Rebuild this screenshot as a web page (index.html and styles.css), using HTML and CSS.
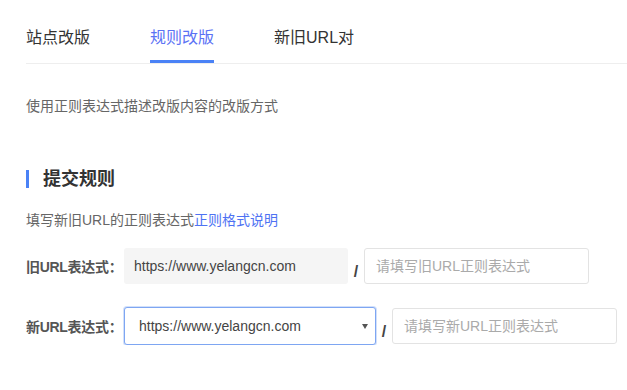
FILE: index.html
```html
<!DOCTYPE html>
<html>
<head>
    <title>规则改版</title>
    <link rel="stylesheet" href="styles.css">
</head>
<body>
    <div class="container">
        <div class="tabs">
            <a class="tab">站点改版</a>
            <a class="tab active">规则改版</a>
            <a class="tab">新旧URL对</a>
        </div>

        <p class="desc">使用正则表达式描述改版内容的改版方式</p>

        <h2 class="section-title">提交规则</h2>
        <p class="hint">填写新旧URL的正则表达式<a class="link">正则格式说明</a></p>

        <div class="form-row">
            <label class="row-label">旧URL表达式：</label>
            <div class="field readonly">https://www.yelangcn.com</div>
            <span class="slash">/</span>
            <input type="text" class="field text-input" placeholder="请填写旧URL正则表达式">
        </div>

        <div class="form-row">
            <label class="row-label">新URL表达式：</label>
            <div class="select-wrap">
                <select class="select">
                    <option>https://www.yelangcn.com</option>
                </select>
            </div>
            <span class="slash">/</span>
            <input type="text" class="field text-input" placeholder="请填写新URL正则表达式">
        </div>
    </div>
</body>
</html>
```

FILE: styles.css
```css
body {
    margin: 0;
    font-family: "Liberation Sans", "Noto Sans CJK SC", sans-serif;
    background-color: white;
    color: #333;
}
.container {
    padding-left: 26px;
}
.tabs {
    display: flex;
    gap: 60px;
    border-bottom: 1px solid #eee;
    height: 63px;
}
.tab {
    padding-top: 26px;
    padding-bottom: 10px;
    line-height: 24px;
    font-size: 16px;
    color: #333;
    border-bottom: 3px solid transparent;
}
.tab.active {
    color: #5b72f5;
    border-bottom-color: #4a82f6;
}
.desc {
    margin: 32px 0 0;
    font-size: 14px;
    line-height: 20px;
    color: #666;
}
.section-title {
    margin: 54px 0 0;
    font-size: 18px;
    line-height: 18px;
    font-weight: bold;
    color: #333;
    border-left: 3px solid #4a82f6;
    padding-left: 14px;
}
.hint {
    margin: 22px 0 0;
    font-size: 14px;
    line-height: 20px;
    color: #666;
}
.link {
    color: #4e72f3;
}
.form-row {
    display: flex;
    align-items: center;
    margin-top: 18px;
}
.form-row + .form-row {
    margin-top: 23px;
}
.row-label {
    flex-shrink: 0;
    width: 98px;
    white-space: nowrap;
    font-size: 14px;
    font-weight: bold;
    letter-spacing: -0.3px;
    color: #555;
}
.field {
    box-sizing: border-box;
    flex-shrink: 0;
    width: 225px;
    height: 36px;
    font-size: 14px;
    font-family: "Liberation Sans", "Noto Sans CJK SC", sans-serif;
    border-radius: 3px;
}
.readonly {
    width: 224px;
    background-color: #f5f5f5;
    color: #444;
    padding-left: 10px;
    line-height: 36px;
}
.text-input {
    border: 1px solid #e3e3e3;
    padding: 0 11px;
    color: #333;
    outline: none;
}
.text-input::placeholder {
    color: #aaa;
}
.slash {
    flex-shrink: 0;
    width: 16px;
    text-align: center;
    font-size: 16px;
    font-weight: bold;
    color: #444;
    margin-top: 12px;
}
.select-wrap {
    position: relative;
    flex-shrink: 0;
    width: 252px;
    height: 38px;
}
.select {
    box-sizing: border-box;
    width: 100%;
    height: 100%;
    appearance: none;
    -webkit-appearance: none;
    background: white;
    border: 1px solid #7ea6f2;
    box-shadow: 0 0 0 1px rgba(126, 166, 242, 0.35);
    border-radius: 3px;
    padding-left: 14px;
    font-size: 14px;
    font-family: "Liberation Sans", "Noto Sans CJK SC", sans-serif;
    color: #444;
    outline: none;
}
.select-wrap::after {
    content: "";
    position: absolute;
    right: 8px;
    top: 17px;
    border-left: 3px solid transparent;
    border-right: 3px solid transparent;
    border-top: 5px solid #555;
}
```
